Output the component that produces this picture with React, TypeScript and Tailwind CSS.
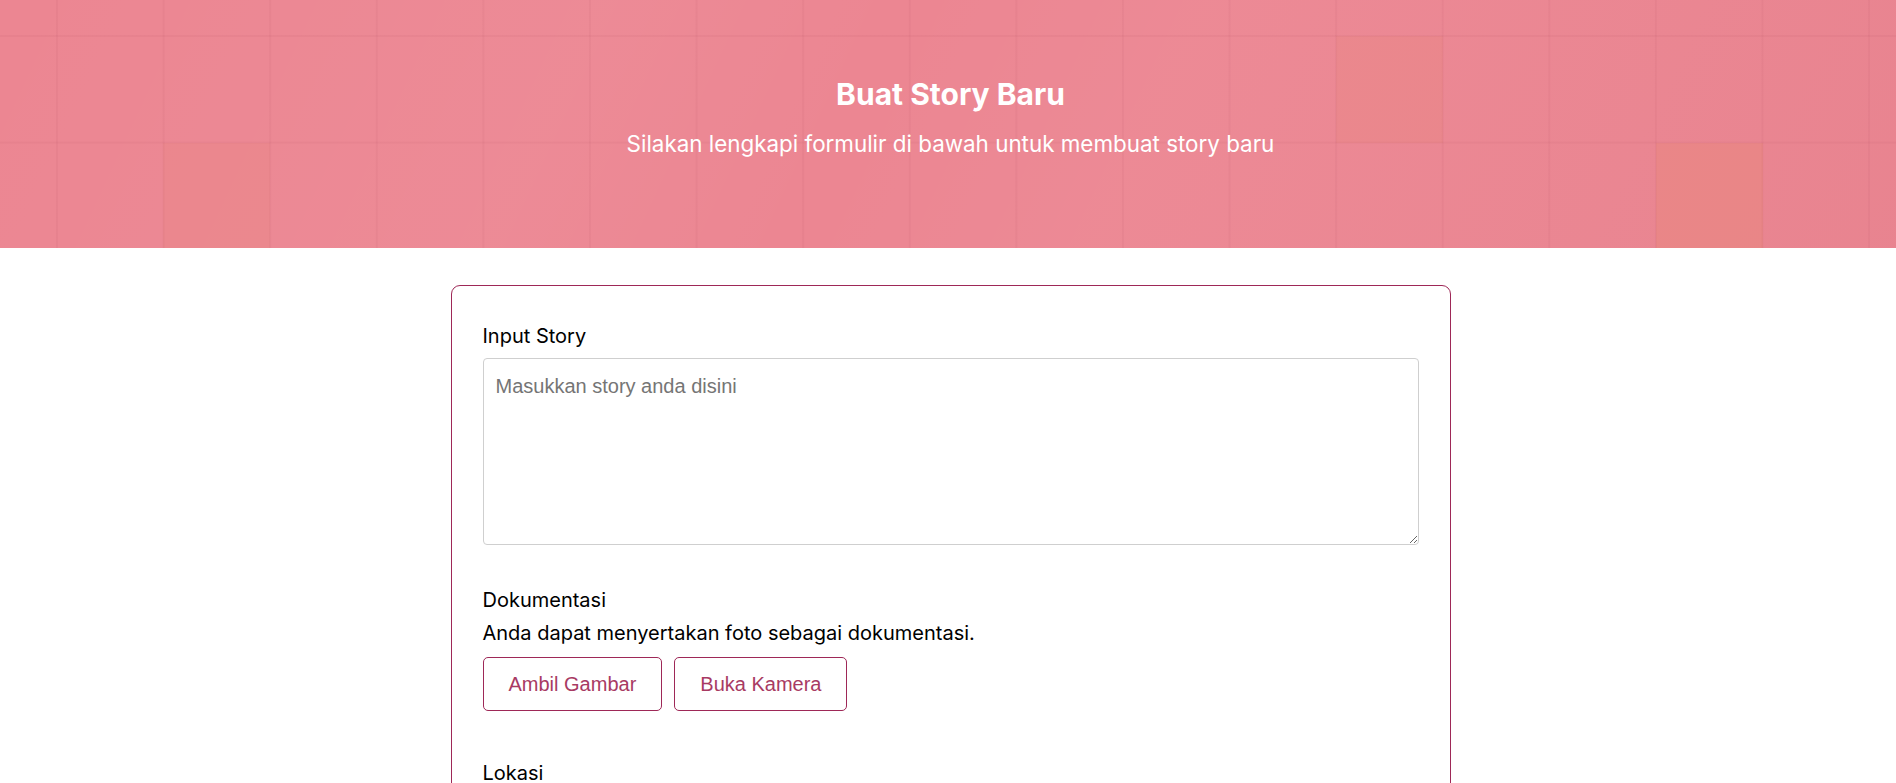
import React from "react";

export default function App() {
  return (
    <div className="min-h-screen bg-white font-['Inter','Noto_Sans',sans-serif] text-black">
      <header className="relative h-[248px] overflow-hidden bg-[#ec8692]">
        <div className="absolute inset-0 bg-[linear-gradient(115deg,rgba(255,255,255,0)_0%,rgba(255,255,255,0.04)_30%,rgba(255,255,255,0)_45%,rgba(255,255,255,0.03)_60%,rgba(120,60,70,0.03)_100%)]" />
        <div className="absolute left-[163px] top-[143px] h-[107px] w-[107px] bg-[rgba(235,135,110,0.15)]" />
        <div className="absolute left-[1336px] top-[36px] h-[107px] w-[107px] bg-[rgba(235,135,110,0.18)]" />
        <div className="absolute left-[1656px] top-[143px] h-[107px] w-[107px] bg-[rgba(235,135,110,0.28)]" />
        <div className="absolute inset-0 bg-[linear-gradient(to_right,rgba(150,50,70,0.06)_2px,transparent_2px),linear-gradient(to_bottom,rgba(150,50,70,0.06)_2px,transparent_2px)] bg-[size:106.6px_106.6px] bg-[position:56px_35px]" />
        <div className="relative flex flex-col items-center pl-[5px] pt-[76px] text-white">
          <h1 className="text-[30px] font-bold leading-[36px]">Buat Story Baru</h1>
          <p className="mt-[18px] text-[22.4px] leading-[28px]">
            Silakan lengkapi formulir di bawah untuk membuat story baru
          </p>
        </div>
      </header>

      <main className="flex justify-center pl-[5px] pt-[37px] pb-10">
        <form className="w-[1000px] rounded-[9px] border border-[#9e2857] px-[31px] pt-[35px] pb-8">
          <label className="mb-[7px] block text-[20px] leading-[30px]">Input Story</label>
          <textarea
            placeholder="Masukkan story anda disini"
            className="block h-[187px] w-full rounded-[4px] border border-[#cfcfcf] p-3 font-['Liberation_Sans',Arial,sans-serif] text-[20px] leading-[30px] placeholder:text-[#757575] focus:outline-none"
          />

          <section className="mt-[40px]">
            <div className="text-[20px] leading-[30px]">Dokumentasi</div>
            <p className="mt-[3px] text-[20px] leading-[30px]">
              Anda dapat menyertakan foto sebagai dokumentasi.
            </p>
            <div className="mt-[9px] flex gap-3">
              <button
                type="button"
                className="h-[54px] rounded-[5px] border border-[#9e2857] bg-white px-[25px] font-['Liberation_Sans',Arial,sans-serif] text-[20px] text-[#a83a63]"
              >
                Ambil Gambar
              </button>
              <button
                type="button"
                className="h-[54px] rounded-[5px] border border-[#9e2857] bg-white px-[25px] font-['Liberation_Sans',Arial,sans-serif] text-[20px] text-[#a83a63]"
              >
                Buka Kamera
              </button>
            </div>
          </section>

          <section className="mt-[47px]">
            <div className="text-[20px] leading-[30px]">Lokasi</div>
            <p className="mt-[3px] text-[20px] leading-[30px]">
              Anda dapat menyertakan lokasi Anda.
            </p>
            <div className="mt-[9px] h-[300px] w-full rounded-[4px] border border-[#cfcfcf] bg-[#f3f3f3]" />
          </section>

          <div className="mt-10">
            <button
              type="button"
              className="h-[54px] w-full rounded-[5px] bg-[#9e2857] font-['Liberation_Sans',Arial,sans-serif] text-[20px] text-white"
            >
              Buat Story
            </button>
          </div>
        </form>
      </main>
    </div>
  );
}
